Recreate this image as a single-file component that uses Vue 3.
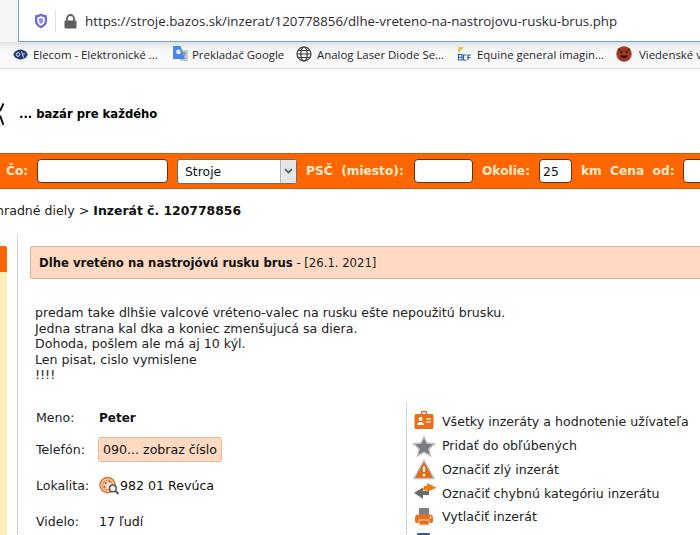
<script setup>
const bookmarks = [
  { id: 'elecom', label: 'Elecom - Elektronické ...' },
  { id: 'gt', label: 'Prekladač Google' },
  { id: 'globe', label: 'Analog Laser Diode Se...' },
  { id: 'bcf', label: 'Equine general imagin...' },
  { id: 'face', label: 'Viedenské v' },
]
const actions = [
  { id: 'user', label: 'Všetky inzeráty a hodnotenie užívateľa' },
  { id: 'star', label: 'Pridať do obľúbených' },
  { id: 'warn', label: 'Označiť zlý inzerát' },
  { id: 'swap', label: 'Označiť chybnú kategóriu inzerátu' },
  { id: 'print', label: 'Vytlačiť inzerát' },
]
</script>

<template>
  <div class="page">
    <div class="urlwrap">
      <div class="urlbar">
        <svg class="shield" width="14" height="16" viewBox="0 0 14 16">
          <path d="M7 .8 13 2.600V8c0 3.400-2.600 5.900-6 7.200C3.600 13.900 1 11.400 1 8V2.600Z" fill="#6f6bd8" />
          <path d="M7 3.300 10.700 4.400V8C10.700 10.100 9.200 11.800 7 12.800 4.800 11.800 3.300 10.100 3.300 8V4.400Z" fill="#fff" />
          <path d="M7 5 9 5.700V8C9 9.200 8.200 10.200 7 10.900 5.800 10.200 5 9.200 5 8V5.700Z" fill="#8f8be2" />
        </svg>
        <span class="sep"></span>
        <svg class="lock" width="13" height="15" viewBox="0 0 13 15">
          <path d="M3 7V4.500a3.500 3.500 0 0 1 7 0V7" fill="none" stroke="#5f5f63" stroke-width="1.800" />
          <rect x="0.500" y="6.500" width="12" height="8" rx="1" fill="#5f5f63" />
        </svg>
        <span class="url">https://stroje.bazos.sk/inzerat/120778856/dlhe-vreteno-na-nastrojovu-rusku-brus.php</span>
      </div>
    </div>

    <div class="bookmarks">
      <div v-for="b in bookmarks" :key="b.id" class="bm" :class="'bm-' + b.id">
        <svg v-if="b.id === 'elecom'" width="15" height="11" viewBox="0 0 15 11">
          <path d="M4 1.500Q7.500 -0.500 11 1.500L13 2.500 14.800 5.500 13 8.500 11 9.500Q7.500 11.500 4 9.500L2 8.500 .2 5.500 2 2.500Z" fill="#1f3c70" />
          <circle cx="5" cy="5.500" r="1.800" fill="none" stroke="#dfe6f2" stroke-width="1" />
          <path d="M8.500 2.500 10.500 8.500M10 5h2" stroke="#dfe6f2" stroke-width="1" />
        </svg>
        <svg v-else-if="b.id === 'gt'" width="16" height="18" viewBox="0 0 16 18">
          <path d="M6 5h10v11H8Z" fill="#c6c9cc" />
          <path d="M10 8h4M12 7v2M10.500 13l3-4" stroke="#7b7f83" stroke-width="1" fill="none" />
          <path d="M1 1.500Q1 1 1.500 1h7L13 14H1.500Q1 14 1 13.500Z" fill="#4a87ea" />
          <path d="M8.500 6H6.500V7.500H8C7.700 8.600 5 8.700 4.700 7.100 4.500 5.400 6.400 4.700 7.500 5.500" fill="none" stroke="#fff" stroke-width="1.200" />
        </svg>
        <svg v-else-if="b.id === 'globe'" width="16" height="16" viewBox="0 0 16 16" fill="none" stroke="#3d3d40" stroke-width="1.200">
          <circle cx="8" cy="8" r="7" />
          <ellipse cx="8" cy="8" rx="3.200" ry="7" />
          <path d="M1 8h14M2 4.500h12M2 11.500h12" />
        </svg>
        <svg v-else-if="b.id === 'bcf'" width="14" height="14" viewBox="0 0 14 14">
          <path d="M1 0h6L1 6.500Z" fill="#e8c25a" />
          <path d="M1.500 7.500h3.500v5.500h-3.500ZM1.500 10.200h3.500" fill="none" stroke="#2c5e9e" stroke-width="1.100" />
          <path d="M9.500 8H6.500V13H9.500M14 8H11V13M11 10.500H13.500" fill="none" stroke="#2c5e9e" stroke-width="1.200" />
        </svg>
        <svg v-else width="16" height="16" viewBox="0 0 16 16">
          <circle cx="8" cy="8" r="7.700" fill="#a33a1e" />
          <circle cx="5.500" cy="6" r="1.200" fill="#2a120a" />
          <circle cx="10.500" cy="6" r="1.200" fill="#2a120a" />
          <path d="M4 9.500c1 3.500 7 3.500 8 0Z" fill="#2a120a" />
          <circle cx="3" cy="3.500" r="1" fill="#2a120a" />
          <circle cx="13" cy="3.500" r="1" fill="#2a120a" />
        </svg>
        <span class="bm-label">{{ b.label }}</span>
      </div>
    </div>

    <header class="head">
      <svg class="logo-bit" width="4" height="24" viewBox="0 0 4 24">
        <path d="M0 9 3.500 1.500M0 13.500 3.500 23" stroke="#111" stroke-width="2" fill="none" />
      </svg>
      <b class="tagline">... bazár pre každého</b>
    </header>

    <form class="search" @submit.prevent>
      <label class="lab lab-co">Čo:</label>
      <input class="inp inp-co" type="text" />
      <div class="select">
        <span>Stroje</span>
        <i class="arrow">
          <svg width="9" height="6" viewBox="0 0 9 6"><path d="M1 1 4.500 4.500 8 1" fill="none" stroke="#4d5560" stroke-width="1.600" /></svg>
        </i>
      </div>
      <label class="lab lab-psc">PSČ&nbsp; (miesto):</label>
      <input class="inp inp-psc" type="text" />
      <label class="lab lab-ok">Okolie:</label>
      <input class="inp inp-km" type="text" value="25" />
      <label class="lab lab-km">km</label>
      <label class="lab lab-cena">Cena&nbsp; od:</label>
      <input class="inp inp-od" type="text" />
    </form>

    <div class="crumbs">hradné diely &gt; <b>Inzerát č. 120778856</b></div>

    <div class="main">
      <aside class="side">
        <div class="side-tab"></div>
      </aside>
      <div class="rule-left"></div>
      <section class="content">
        <h1 class="title"><b>Dlhe vreténo na nastrojóvú rusku brus</b> <span class="dash">-</span> <span class="date">[26.1. 2021]</span></h1>
        <p class="desc">predam take dlhšie valcové vréteno-valec na rusku ešte nepoužitú brusku.<br />Jedna strana kal dka a koniec zmenšujucá sa diera.<br />Dohoda, pošlem ale má aj 10 kýl.<br />Len pisat, cislo vymislene<br />!!!!</p>
        <div class="lower">
          <div class="info">
            <div class="row row-meno"><span class="k">Meno:</span><b class="name">Peter</b></div>
            <div class="row row-tel"><span class="k">Telefón:</span><span class="phone">090... zobraz číslo</span></div>
            <div class="row row-lok">
              <span class="k">Lokalita:</span>
              <svg class="pin" width="21" height="20" viewBox="0 0 22 20">
                <circle cx="9" cy="9" r="8" fill="#f6c39a" stroke="#d9782f" stroke-width="1.500" />
                <circle cx="9" cy="9" r="5" fill="#fbe2cb" stroke="#d9782f" />
                <circle cx="7" cy="7" r="1.200" fill="#c8521a" />
                <circle cx="6" cy="11" r="1" fill="#c8521a" />
                <circle cx="11" cy="5.500" r="1" fill="#c8521a" />
                <circle cx="14.500" cy="12.500" r="3.500" fill="#eef0f2" stroke="#55595e" stroke-width="1.600" />
                <path d="M17 15 20.500 18.500" stroke="#55595e" stroke-width="2.200" />
              </svg>
              <span>982 01 Revúca</span>
            </div>
            <div class="row row-vid"><span class="k">Videlo:</span><span>17 ľudí</span></div>
          </div>
          <div class="actions">
            <div v-for="a in actions" :key="a.id" class="act" :class="'act-' + a.id">
              <svg class="ico" width="26" height="22" viewBox="0 0 26 22">
                <template v-if="a.id === 'user'">
                  <path d="M9.500 4.500V2.500Q9.500 1.500 10.500 1.500H13.500Q14.500 1.500 14.500 2.500V4.500" fill="none" stroke="#e36f1e" stroke-width="1.500" />
                  <rect x="2.500" y="4" width="19" height="15" rx="1.500" fill="#e8701a" />
                  <circle cx="8.500" cy="9" r="2" fill="#fff" />
                  <path d="M5 15c0-4 7-4 7 0Z" fill="#fff" />
                  <path d="M14 9h5M14 12h5" stroke="#fbd9bb" stroke-width="1.300" />
                </template>
                <template v-else-if="a.id === 'star'">
                  <path d="M12 1.500 15 8 22.500 8.800 17 13.700 18.500 21 12 17.300 5.500 21 7 13.700 1.500 8.800 9 8Z" fill="#7b7d82" stroke="#c4c6c9" stroke-width="1.500" />
                </template>
                <template v-else-if="a.id === 'warn'">
                  <path d="M12 1.500 22 19.500H2Z" fill="#e0691b" stroke="#bdbdbd" stroke-width="1.500" stroke-linejoin="round" />
                  <path d="M12 7.500V13" stroke="#fff" stroke-width="2.200" />
                  <circle cx="12" cy="16" r="1.300" fill="#fff" />
                </template>
                <template v-else-if="a.id === 'swap'">
                  <path d="M2 10.700 11 5.500V9H17V13H11V17Z" fill="#6a6a6a" />
                  <path d="M24.600 5.700 15 1V4H12L11 8.300H15V10Z" fill="#f07a12" />
                </template>
                <template v-else>
                  <rect x="7" y="2" width="10" height="7" fill="#7d8084" />
                  <path d="M3 12Q3 8.500 6 8.500H18Q21 8.500 21 12V15Q21 17 19 17H5Q3 17 3 15Z" fill="#e8701a" />
                  <rect x="7" y="14" width="10" height="5" fill="#e8701a" stroke="#fbe6d3" stroke-width="0.800" />
                  <circle cx="18.500" cy="11.500" r="0.900" fill="#fff" />
                </template>
              </svg>
              <span>{{ a.label }}</span>
            </div>
            <div class="act act-fb"><i class="fb"></i></div>
          </div>
        </div>
      </section>
    </div>
  </div>
</template>

<style>
html, body { margin: 0; background: #fff; overflow: hidden; }
</style>

<style scoped>
.page {
  width: 700px;
  height: 535px;
  overflow: hidden;
  font-family: "DejaVu Sans", sans-serif;
  font-size: 12.600px;
  color: #111;
  background: #fff;
}
.urlwrap { height: 42px; background: #f5f5f6; padding-left: 18px; box-sizing: border-box; }
.urlbar {
  height: 42px;
  box-sizing: border-box;
  background: #fff;
  border-left: 1px solid #6fa8d6;
  border-bottom: 1px solid #6fa8d6;
  display: flex;
  align-items: center;
  padding: 1px 0 0 15px;
  white-space: nowrap;
}
.shield { flex: none; }
.sep { flex: none; width: 1px; height: 22px; background: #e2e2e4; margin: 0 8px 0 7px; }
.lock { flex: none; }
.url { font-family: "Open Sans", sans-serif; font-size: 13.300px; margin-left: 8px; color: #2a2a2e; }
.bookmarks {
  height: 27px;
  box-sizing: border-box;
  background: linear-gradient(#dfe2e5 0, #f3f4f5 6px, #f9f9fa 14px);
  border-bottom: 1px solid #dcdcde;
  display: flex;
  align-items: center;
  white-space: nowrap;
  overflow: hidden;
  padding: 0 0 2px 13px;
  font-family: "Open Sans", sans-serif;
  font-size: 11.400px;
  color: #26262a;
}
.bm { display: flex; align-items: center; flex: none; gap: 5px; }
.bm-elecom { width: 159px; }
.bm-gt { width: 124px; gap: 4px; }
.bm-globe { width: 161px; gap: 5px; }
.bm-bcf { width: 159px; gap: 6px; }
.bm-face { gap: 7px; }
.head { height: 84px; display: flex; align-items: center; box-sizing: border-box; padding-top: 5px; }
.logo-bit { flex: none; }
.tagline { margin-left: 15px; font-size: 11.600px; color: #000; }
.search {
  height: 36px;
  box-sizing: border-box;
  background: #ff6600;
  border-top: 1px solid #c55a15;
  border-bottom: 1px solid #c55a15;
  display: flex;
  align-items: center;
  white-space: nowrap;
  overflow: hidden;
}
.lab { flex: none; color: #ffeccf; font-weight: 700; font-size: 12.200px; }
.inp {
  flex: none;
  height: 24px;
  box-sizing: border-box;
  border: 1px solid #5c3415;
  border-radius: 4px;
  background: #fff;
  padding: 0 4px;
  font: 12.400px "DejaVu Sans", sans-serif;
  color: #111;
  outline: none;
}
.lab-co { margin-left: 6px; width: 31px; }
.inp-co { width: 131px; }
.select {
  flex: none;
  width: 120px;
  height: 25px;
  margin-left: 9px;
  box-sizing: border-box;
  border: 1px solid #6d6d6d;
  border-radius: 3px;
  background: #fff;
  display: flex;
  align-items: center;
  justify-content: space-between;
  padding-left: 7px;
  font-size: 12.400px;
}
.arrow {
  width: 16px;
  height: 23px;
  box-sizing: border-box;
  background: #e4e6e8;
  border-left: 1px solid #b3b5b8;
  display: flex;
  align-items: center;
  justify-content: center;
}
.lab-psc { margin-left: 9px; width: 108px; }
.inp-psc { width: 59px; }
.lab-ok { margin-left: 9px; width: 56px; }
.inp-km { width: 33px; padding: 0 3px; margin-left: 1px; }
.lab-km { margin-left: 9px; width: 20px; }
.lab-cena { margin-left: 9px; width: 64px; }
.inp-od { width: 60px; margin-left: 9px; }
.crumbs { height: 13px; line-height: 16px; margin: 14px 0 0 -4px; white-space: nowrap; color: #222; }
.crumbs b { color: #111; font-size: 12.400px; }
.main { display: flex; margin-top: 20px; height: 299px; }
.side { flex: none; width: 7px; padding-top: 10px; background: linear-gradient(#fff 10px, #ffeebb 10px); }
.side-tab { height: 26px; background: #ff6600; border-radius: 0 2px 0 0; }
.rule-left { flex: none; width: 0; margin-left: 10px; border-left: 1px dotted #b4b4b4; }
.content { flex: 1; min-width: 0; margin-left: 12px; padding-top: 10px; }
.title {
  margin: 0;
  height: 33px;
  line-height: 32px;
  box-sizing: border-box;
  background: #ffd9c2;
  border: 1px solid #c9b5a8;
  border-right: none;
  border-radius: 3px 0 0 3px;
  padding-left: 8px;
  font-size: 11.650px;
  font-weight: 400;
  white-space: nowrap;
}
.date { color: #222; }
.desc { margin: 26px 0 0 5px; line-height: 15.500px; font-size: 12.600px; color: #222; }
.lower { display: flex; margin-top: 21px; }
.info { flex: none; width: 376px; padding-top: 6px; }
.row { display: flex; align-items: center; height: 16px; margin-left: 6px; }
.k { flex: none; width: 63px; color: #222; }
.name { font-size: 12px; }
.row-tel { margin-top: 16px; }
.row-lok { margin-top: 20px; }
.row-vid { margin-top: 20px; }
.phone {
  margin-left: -1px;
  height: 25px;
  line-height: 24px;
  box-sizing: border-box;
  padding: 0 4px;
  background: #ffd9c2;
  border: 1px solid #e8b896;
  border-radius: 3px;
}
.pin { flex: none; }
.actions { flex: 1; border-left: 1px dotted #b4b4b4; padding: 5px 0 0 7px; }
.act { display: flex; align-items: center; height: 24px; white-space: nowrap; gap: 4px; color: #222; }
.act-user { height: 25px; }
.act-swap { height: 23px; }
.ico { flex: none; margin-left: -2px; }
.act-fb { height: 4px; align-items: flex-start; padding-top: 4px; margin-left: 3px; }
.fb { display: block; width: 13px; height: 10px; background: #3b5998; border-radius: 1px 1px 0 0; }
</style>
